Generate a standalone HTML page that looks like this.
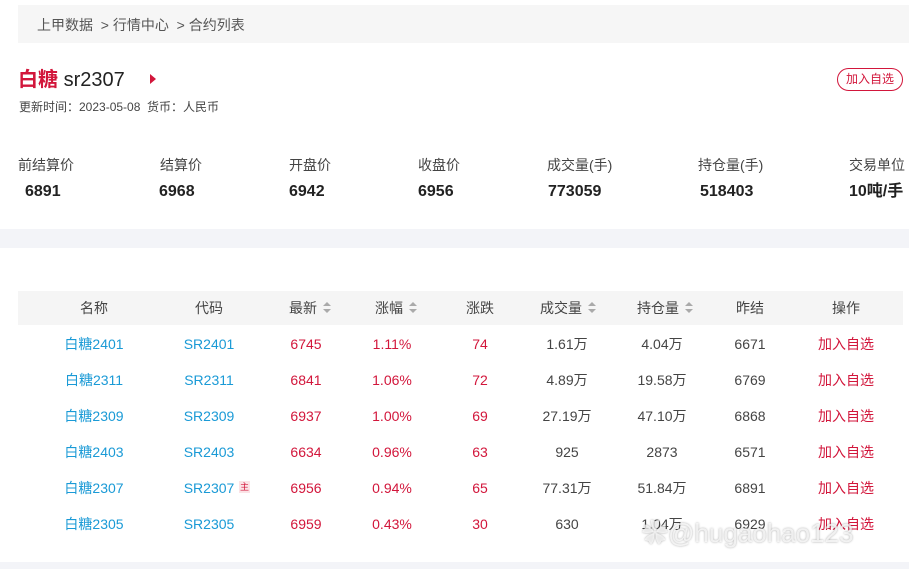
<!DOCTYPE html>
<html><head><meta charset="utf-8"><style>
*{margin:0;padding:0;box-sizing:border-box}
body{width:909px;height:569px;background:#fff;font-family:"Liberation Sans","Noto Sans CJK SC",sans-serif;position:relative;overflow:hidden;color:#333}
.a{position:absolute;white-space:nowrap}
.crumb{left:18px;top:5px;width:891px;height:38px;background:#f6f6f6;font-size:14px;color:#555;padding:0 0 0 19px;line-height:40px}
.lbl{font-size:14px;color:#444;top:155px;line-height:20px}
.val{font-size:16px;font-weight:bold;color:#222;top:182px;line-height:20px}
.band{left:0;width:909px;background:#f3f4f8}
.th{left:18px;top:291px;width:885px;height:34px;background:#f5f5f5}
.c{position:absolute;top:0;transform:translateX(-50%);font-size:14px;line-height:18px;white-space:nowrap}
.h{color:#444}
.b{color:#1a9ad6}.r{color:#d2163b}.g{color:#444}
.s{display:inline-block;width:8px;height:12px;vertical-align:-1px;margin-left:6px;position:relative}
.s:before{content:"";position:absolute;left:0;top:0;border:4px solid transparent;border-bottom:4px solid #aaa;border-top:0}
.s:after{content:"";position:absolute;left:0;top:7px;border:4px solid transparent;border-top:4px solid #aaa;border-bottom:0}
.row{position:relative;height:36px}
</style></head><body>
<div class="a crumb">上甲数据 &nbsp;&gt; 行情中心 &nbsp;&gt; 合约列表</div>
<div class="a" style="left:18px;top:67px;font-size:20px;line-height:26px"><b style="color:#d2163b">白糖</b> <span style="color:#222">sr2307</span></div>
<div class="a" style="left:150px;top:74px;width:0;height:0;border-left:6px solid #d2163b;border-top:5px solid transparent;border-bottom:5px solid transparent"></div>
<div class="a" style="left:19px;top:99px;font-size:12px;line-height:16px;color:#444">更新时间：2023-05-08 &nbsp;货币：人民币</div>
<div class="a" style="left:837px;top:68px;width:66px;height:23px;border:1px solid #d2163b;border-radius:12px;color:#d2163b;font-size:12px;text-align:center;line-height:21px">加入自选</div>
<div class="a lbl" style="left:18px">前结算价</div><div class="a val" style="left:25px">6891</div>
<div class="a lbl" style="left:160px">结算价</div><div class="a val" style="left:159px">6968</div>
<div class="a lbl" style="left:289px">开盘价</div><div class="a val" style="left:289px">6942</div>
<div class="a lbl" style="left:418px">收盘价</div><div class="a val" style="left:418px">6956</div>
<div class="a lbl" style="left:547px">成交量(手)</div><div class="a val" style="left:548px">773059</div>
<div class="a lbl" style="left:698px">持仓量(手)</div><div class="a val" style="left:700px">518403</div>
<div class="a lbl" style="left:849px">交易单位</div><div class="a val" style="left:849px">10吨/手</div>
<div class="a band" style="top:229px;height:19px"></div>
<div class="a th"></div>
<div style="position:absolute;top:299px;left:0;width:909px;height:20px">
<span class="c h" style="left:94px">名称</span><span class="c h" style="left:209px">代码</span>
<span class="c h" style="left:310px">最新<i class="s"></i></span><span class="c h" style="left:396px">涨幅<i class="s"></i></span>
<span class="c h" style="left:480px">涨跌</span><span class="c h" style="left:568px">成交量<i class="s"></i></span>
<span class="c h" style="left:665px">持仓量<i class="s"></i></span><span class="c h" style="left:750px">昨结</span><span class="c h" style="left:846px">操作</span>
</div>
<div style="position:absolute;top:335px;left:0;width:909px">
<div class="row"><span class="c b" style="left:94px">白糖2401</span><span class="c b" style="left:209px">SR2401</span><span class="c r" style="left:306px">6745</span><span class="c r" style="left:392px">1.11%</span><span class="c r" style="left:480px">74</span><span class="c g" style="left:567px">1.61万</span><span class="c g" style="left:662px">4.04万</span><span class="c g" style="left:750px">6671</span><span class="c r" style="left:846px">加入自选</span></div>
<div class="row"><span class="c b" style="left:94px">白糖2311</span><span class="c b" style="left:209px">SR2311</span><span class="c r" style="left:306px">6841</span><span class="c r" style="left:392px">1.06%</span><span class="c r" style="left:480px">72</span><span class="c g" style="left:567px">4.89万</span><span class="c g" style="left:662px">19.58万</span><span class="c g" style="left:750px">6769</span><span class="c r" style="left:846px">加入自选</span></div>
<div class="row"><span class="c b" style="left:94px">白糖2309</span><span class="c b" style="left:209px">SR2309</span><span class="c r" style="left:306px">6937</span><span class="c r" style="left:392px">1.00%</span><span class="c r" style="left:480px">69</span><span class="c g" style="left:567px">27.19万</span><span class="c g" style="left:662px">47.10万</span><span class="c g" style="left:750px">6868</span><span class="c r" style="left:846px">加入自选</span></div>
<div class="row"><span class="c b" style="left:94px">白糖2403</span><span class="c b" style="left:209px">SR2403</span><span class="c r" style="left:306px">6634</span><span class="c r" style="left:392px">0.96%</span><span class="c r" style="left:480px">63</span><span class="c g" style="left:567px">925</span><span class="c g" style="left:662px">2873</span><span class="c g" style="left:750px">6571</span><span class="c r" style="left:846px">加入自选</span></div>
<div class="row"><span class="c b" style="left:94px">白糖2307</span><span class="c b" style="left:209px">SR2307</span><span class="a r" style="left:239px;top:2px;font-size:9px;line-height:12px;background:#fbe3e6;padding:0 1px">主</span><span class="c r" style="left:306px">6956</span><span class="c r" style="left:392px">0.94%</span><span class="c r" style="left:480px">65</span><span class="c g" style="left:567px">77.31万</span><span class="c g" style="left:662px">51.84万</span><span class="c g" style="left:750px">6891</span><span class="c r" style="left:846px">加入自选</span></div>
<div class="row"><span class="c b" style="left:94px">白糖2305</span><span class="c b" style="left:209px">SR2305</span><span class="c r" style="left:306px">6959</span><span class="c r" style="left:392px">0.43%</span><span class="c r" style="left:480px">30</span><span class="c g" style="left:567px">630</span><span class="c g" style="left:662px">1.04万</span><span class="c g" style="left:750px">6929</span><span class="c r" style="left:846px">加入自选</span></div>
</div>
<div class="a" style="left:642px;top:517px;font-size:26px;line-height:32px;color:rgba(255,255,255,.75);text-shadow:0 0 2px rgba(0,0,0,.35)">✿@hugaohao123</div>
<div class="a band" style="top:562px;height:7px"></div>
</body></html>
